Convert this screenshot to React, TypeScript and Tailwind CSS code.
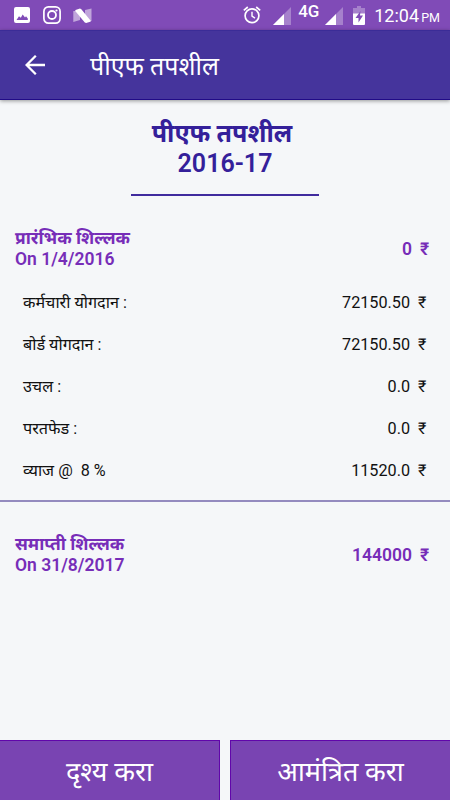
const rows = [
  { label: "कर्मचारी योगदान :", value: "72150.50" },
  { label: "बोर्ड योगदान :", value: "72150.50" },
  { label: "उचल :", value: "0.0" },
  { label: "परतफेड :", value: "0.0" },
  { label: "व्याज @\u00a0 8 %", value: "11520.0" },
];

function SignalIcon() {
  return (
    <svg width="18" height="18" viewBox="0 0 18 18" className="shrink-0">
      <path d="M18 0v18H0z" fill="#fff" fillOpacity=".3" />
      <path d="M11 7v11H0z" fill="#fff" />
    </svg>
  );
}

function StatusBar() {
  return (
    <div className="h-[30px] bg-[#804bb7] flex items-center text-white">
      <svg width="16" height="16" viewBox="0 0 16 16" className="ml-[14px]">
        <path fillRule="evenodd" fill="#fff" d="M2 0h12a2 2 0 0 1 2 2v12a2 2 0 0 1-2 2H2a2 2 0 0 1-2-2V2a2 2 0 0 1 2-2zM2.500 13h11.300V11.500L12 9.300l-1 1.200L8.700 7.500 6.800 10.800 5 9.300z" />
      </svg>
      <svg width="18" height="18" viewBox="0 0 18 18" fill="none" stroke="#fff" className="ml-[13px]">
        <rect x=".9" y=".9" width="16.200" height="16.200" rx="4.500" strokeWidth="1.700" />
        <circle cx="9" cy="9" r="4" strokeWidth="1.800" />
        <circle cx="13.500" cy="4.500" r="1.100" fill="#fff" stroke="none" />
      </svg>
      <svg width="19" height="15" viewBox="0 0 19 15" className="ml-3">
        <path d="M.3 3L3 3l4 5v4L.3 14zM12 2L18.500.5V13h-2L12 7.500z" fill="#fff" fillOpacity=".5" />
        <path d="M2.500 2L7 .6l1.300.6 9.600 11.800-.6.800-4.200 1.200-1.300-.5L2.200 3z" fill="#fff" />
      </svg>
      <div className="ml-auto flex items-center">
        <svg width="18" height="18" viewBox="0 0 18 18" fill="none" stroke="#fff">
          <circle cx="9" cy="9.800" r="6.900" strokeWidth="1.700" />
          <path d="M9 5.800v4.400l3 2" strokeWidth="1.400" />
          <path d="M.8 4.300L4.800 1M17.200 4.300L13.200 1" strokeWidth="1.700" />
        </svg>
        <div className="ml-[12px] mt-[2px]"><SignalIcon /></div>
        <span className="ml-[7px] -mt-[9px] w-[22px] text-[17px] leading-[16px] font-medium">4G</span>
        <div className="ml-[5px] mt-[2px]"><SignalIcon /></div>
        <svg width="12" height="19" viewBox="0 0 12 19" className="ml-[10px]">
          <path d="M4 0h4v2h4v6H0V2h4z" fill="#fff" fillOpacity=".3" />
          <path d="M0 7.500h12V18a1 1 0 0 1-1 1H1a1 1 0 0 1-1-1z" fill="#fff" />
          <path d="M7.500 5L2.500 12h3v4.500l4.500-7H7z" fill="#804bb7" />
        </svg>
        <span className="ml-[9px] mr-[10px] mt-[3px] flex items-baseline leading-[20px]">
          <span className="w-[47px] text-[18px]">12:04</span>
          <span className="text-[12.500px]">PM</span>
        </span>
      </div>
    </div>
  );
}

function Balance({ title, date, amount }: { title: string; date: string; amount: string }) {
  return (
    <div className="flex items-center justify-between pl-[15px] pr-[20px] h-[42px] text-[17.400px] leading-[21px] font-bold text-[#772db8]">
      <div>
        <p>{title}</p>
        <p className="text-[17.500px] font-semibold">{date}</p>
      </div>
      <p className="flex text-[17.500px] font-semibold">
        <span>{amount}</span>
        <span className="w-[10px] ml-[8px]">₹</span>
      </p>
    </div>
  );
}

export default function App() {
  return (
    <div className="w-[450px] h-[800px] flex flex-col overflow-hidden bg-[#f5f7f9] font-['Roboto','Noto_Sans_Devanagari','Noto_Sans',sans-serif]">
      <StatusBar />

      {/* App bar */}
      <header className="relative h-[70px] shrink-0 flex items-center bg-[#45349c] border-t border-b border-t-[#3b2c97] border-b-[#210b87] shadow-[0_1px_4px_rgba(0,0,0,0.4)] text-white">
        <svg width="20" height="20" viewBox="0 0 20 20" fill="none" stroke="#fff" strokeWidth="2.300" className="ml-[25px]">
          <path d="M20 10H2M10.800.8L1.600 10l9.200 9.200" />
        </svg>
        <h1 className="ml-[45px] pt-[3px] text-[25px] leading-[32px]">पीएफ तपशील</h1>
      </header>

      <main className="flex-1">
        <div className="mx-auto w-[188px] h-[96px] pt-[19px] border-b-2 border-[#402b9e] text-center text-[#34209a]">
          <h2 className="pr-[6px] text-[25px] leading-[30px] font-bold whitespace-nowrap">पीएफ तपशील</h2>
          <p className="text-[25px] leading-[30px] font-semibold">2016-17</p>
        </div>

        <div className="mt-[32px]">
          <Balance title="प्रारंभिक शिल्लक" date="On 1/4/2016" amount="0" />
        </div>

        <div className="mt-[11px] pt-px h-[221px] border-b-2 border-[#948bbf] text-[16.200px] leading-[20px] text-[#111]">
          {rows.map((row) => (
            <div key={row.label} className="h-[42px] flex items-center justify-between pl-[23px] pr-[22px]">
              <span>{row.label}</span>
              <span className="flex">
                <span>{row.value}</span>
                <span className="w-[10px] ml-[8px]">₹</span>
              </span>
            </div>
          ))}
        </div>

        <div className="mt-[32px]">
          <Balance title="समाप्ती शिल्लक" date="On 31/8/2017" amount="144000" />
        </div>
      </main>

      <footer className="h-[60px] grid grid-cols-2 gap-[10px] text-white text-[27px] leading-[32px]">
        <button className="pt-[3px] bg-[#7944b2] border border-b-0 border-l-0 border-[#6106aa]">दृश्य करा</button>
        <button className="pt-[3px] bg-[#7944b2] border border-b-0 border-r-0 border-[#6106aa]">आमंत्रित करा</button>
      </footer>
    </div>
  );
}
